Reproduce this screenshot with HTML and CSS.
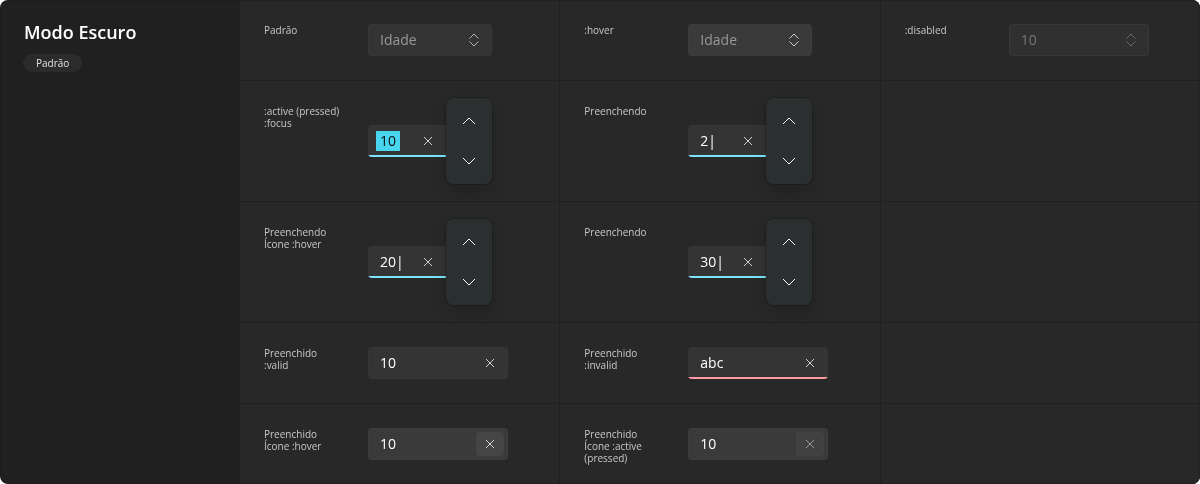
FILE: index.html
```html
<!DOCTYPE html>
<html lang="pt-BR">
<head>
<meta charset="utf-8">
<title>Modo Escuro</title>
<link rel="stylesheet" href="styles.css">
</head>
<body>
<svg class="sprite" aria-hidden="true">
  <symbol id="close" viewBox="0 0 12 12"><path d="M2 2L10 10M10 2L2 10"/></symbol>
  <symbol id="updown" viewBox="0 0 12 14"><path d="M1.500 5.500L6 1L10.500 5.500M1.500 8.500L6 13L10.500 8.500"/></symbol>
  <symbol id="up" viewBox="0 0 14 14"><path d="M1 10L7 4L13 10"/></symbol>
  <symbol id="down" viewBox="0 0 14 14"><path d="M1 4L7 10L13 4"/></symbol>
</svg>
<main class="board">
  <header class="side">
    <h1 class="title">Modo Escuro</h1>
    <span class="tag">Padrão</span>
  </header>
  <div class="states">
    <section class="cell">
      <label class="label" for="f1">Padrão</label>
      <div class="field short">
        <input class="input" id="f1" type="text" placeholder="Idade">
        <button class="action muted" type="button" aria-label="Alterar valor"><svg class="icon spin"><use href="#updown"/></svg></button>
      </div>
    </section>
    <section class="cell">
      <label class="label" for="f2">:hover</label>
      <div class="field short hover">
        <input class="input" id="f2" type="text" placeholder="Idade">
        <button class="action" type="button" aria-label="Alterar valor"><svg class="icon spin"><use href="#updown"/></svg></button>
      </div>
    </section>
    <section class="cell">
      <label class="label" for="f3">:disabled</label>
      <div class="field disabled">
        <input class="input" id="f3" type="text" value="10" disabled>
        <button class="action" type="button" aria-label="Alterar valor" disabled><svg class="icon spin"><use href="#updown"/></svg></button>
      </div>
    </section>

    <section class="cell">
      <label class="label" for="f4">:active (pressed)<br>:focus</label>
      <div class="field short focus">
        <input class="input selected" id="f4" type="text" value="10">
        <button class="action" type="button" aria-label="Limpar"><svg class="icon"><use href="#close"/></svg></button>
        <div class="stepper">
          <button class="step" type="button" aria-label="Aumentar"><svg class="arrow"><use href="#up"/></svg></button>
          <button class="step" type="button" aria-label="Diminuir"><svg class="arrow"><use href="#down"/></svg></button>
        </div>
      </div>
    </section>
    <section class="cell">
      <label class="label" for="f5">Preenchendo</label>
      <div class="field short focus">
        <input class="input" id="f5" type="text" value="2|">
        <button class="action" type="button" aria-label="Limpar"><svg class="icon"><use href="#close"/></svg></button>
        <div class="stepper">
          <button class="step" type="button" aria-label="Aumentar"><svg class="arrow"><use href="#up"/></svg></button>
          <button class="step" type="button" aria-label="Diminuir"><svg class="arrow"><use href="#down"/></svg></button>
        </div>
      </div>
    </section>
    <section class="cell"></section>

    <section class="cell">
      <label class="label" for="f6">Preenchendo<br>Ícone :hover</label>
      <div class="field short focus">
        <input class="input" id="f6" type="text" value="20|">
        <button class="action" type="button" aria-label="Limpar"><svg class="icon"><use href="#close"/></svg></button>
        <div class="stepper">
          <button class="step" type="button" aria-label="Aumentar"><svg class="arrow"><use href="#up"/></svg></button>
          <button class="step" type="button" aria-label="Diminuir"><svg class="arrow"><use href="#down"/></svg></button>
        </div>
      </div>
    </section>
    <section class="cell">
      <label class="label" for="f7">Preenchendo</label>
      <div class="field short focus">
        <input class="input" id="f7" type="text" value="30|">
        <button class="action" type="button" aria-label="Limpar"><svg class="icon"><use href="#close"/></svg></button>
        <div class="stepper">
          <button class="step" type="button" aria-label="Aumentar"><svg class="arrow"><use href="#up"/></svg></button>
          <button class="step" type="button" aria-label="Diminuir"><svg class="arrow"><use href="#down"/></svg></button>
        </div>
      </div>
    </section>
    <section class="cell"></section>

    <section class="cell">
      <label class="label" for="f8">Preenchido<br>:valid</label>
      <div class="field">
        <input class="input" id="f8" type="text" value="10">
        <button class="action" type="button" aria-label="Limpar"><svg class="icon"><use href="#close"/></svg></button>
      </div>
    </section>
    <section class="cell">
      <label class="label" for="f9">Preenchido<br>:invalid</label>
      <div class="field invalid">
        <input class="input" id="f9" type="text" value="abc">
        <button class="action" type="button" aria-label="Limpar"><svg class="icon"><use href="#close"/></svg></button>
      </div>
    </section>
    <section class="cell"></section>

    <section class="cell">
      <label class="label" for="f10">Preenchido<br>Ícone :hover</label>
      <div class="field hover">
        <input class="input" id="f10" type="text" value="10">
        <button class="action over" type="button" aria-label="Limpar"><svg class="icon"><use href="#close"/></svg></button>
      </div>
    </section>
    <section class="cell">
      <label class="label" for="f11">Preenchido<br>Ícone :active (pressed)</label>
      <div class="field hover">
        <input class="input" id="f11" type="text" value="10">
        <button class="action pressed" type="button" aria-label="Limpar"><svg class="icon"><use href="#close"/></svg></button>
      </div>
    </section>
    <section class="cell"></section>
  </div>
</main>
</body>
</html>
```
FILE: styles.css
```css
* { box-sizing: border-box; }

body {
  margin: 0;
  background: #fff;
  font-family: "Open Sans", "Noto Sans", sans-serif;
}

.sprite { display: none; }

.board {
  display: grid;
  grid-template-columns: 240px 1fr;
  background: #202020;
  border-radius: 8px;
  overflow: hidden;
  outline: 1px solid rgba(0, 0, 0, 0.12);
  outline-offset: -1px;
  will-change: transform;
}

.side { padding: 20px 24px; }

.title {
  margin: 0;
  font-size: 18px;
  line-height: 24px;
  font-weight: 600;
  color: #fff;
}

.tag {
  display: inline-block;
  margin: 10px 0 0 -1px;
  padding: 0 13px;
  border-radius: 9px;
  background: #2b2b2b;
  color: #e4e4e4;
  font-size: 10px;
  line-height: 18px;
  vertical-align: top;
}

.states {
  display: grid;
  grid-template-columns: repeat(3, 1fr);
  gap: 1px;
  background: #202020;
}

.cell {
  display: flex;
  align-items: flex-start;
  gap: 24px;
  min-height: 80px;
  padding: 24px 24px 20px;
  background: #282828;
}

.label {
  width: 80px;
  flex: none;
  font-size: 10px;
  line-height: 12px;
  color: #c9c9c9;
}

.field {
  position: relative;
  display: flex;
  align-items: center;
  width: 140px;
  height: 32px;
  padding-right: 4px;
  border-radius: 4px;
  background: #343434;
  box-shadow: inset 0 0 0 1px rgba(255, 255, 255, 0.02);
}

.field.short { width: 124px; }
.field.hover { background: #3a3a3a; }

.field.disabled {
  background: #303030;
  box-shadow: inset 0 0 0 1px rgba(255, 255, 255, 0.04);
}

.field.focus {
  margin: 20px 0 24px;
  padding-right: 50px;
  background: linear-gradient(#7be3fb, #7be3fb) bottom / 100% 2px no-repeat #343434;
}

.field.invalid {
  background: linear-gradient(#ff99a4, #ff99a4) bottom / 100% 2px no-repeat #343434;
}

.field.focus,
.field.invalid { box-shadow: none; }

.input {
  flex: 1;
  min-width: 0;
  height: 20px;
  padding: 0 0 0 12px;
  border: 0;
  outline: 0;
  background: none;
  font: 14px/20px "Open Sans", "Noto Sans", sans-serif;
  color: #fff;
}

.input::placeholder { color: #989898; opacity: 1; }
.input:disabled { color: #757575; }

.input.selected {
  flex: none;
  width: 24px;
  margin: 0 14px 0 8px;
  padding: 0 4px;
  background: #48d5f0;
  color: #101010;
}

.action {
  display: flex;
  flex: none;
  align-items: center;
  justify-content: center;
  width: 28px;
  height: 24px;
  padding: 0;
  border: 0;
  border-radius: 4px;
  background: none;
  color: #cfcfcf;
}

.action.muted { color: #b4b4b4; }
.action:disabled { color: #6c6c6c; }
.action.over { background: #454545; }
.action.pressed { background: #414141; color: #989898; }

.icon {
  width: 12px;
  height: 12px;
  fill: none;
  stroke: currentColor;
  stroke-width: 1;
}

.icon.spin { height: 14px; }

.stepper {
  position: absolute;
  top: -27px;
  right: 0;
  display: flex;
  flex-direction: column;
  width: 46px;
  height: 86px;
  padding: 3px;
  border-radius: 8px;
  background: linear-gradient(#2c2f2f, #2a2f31);
  box-shadow: 0 0 0 1px rgba(0, 0, 0, 0.2), 0 8px 16px rgba(0, 0, 0, 0.16);
}

.step {
  display: flex;
  flex: 1;
  align-items: center;
  justify-content: center;
  padding: 0;
  border: 0;
  background: none;
  color: #fff;
}

.arrow {
  width: 14px;
  height: 14px;
  fill: none;
  stroke: currentColor;
  stroke-width: 1;
}
```
